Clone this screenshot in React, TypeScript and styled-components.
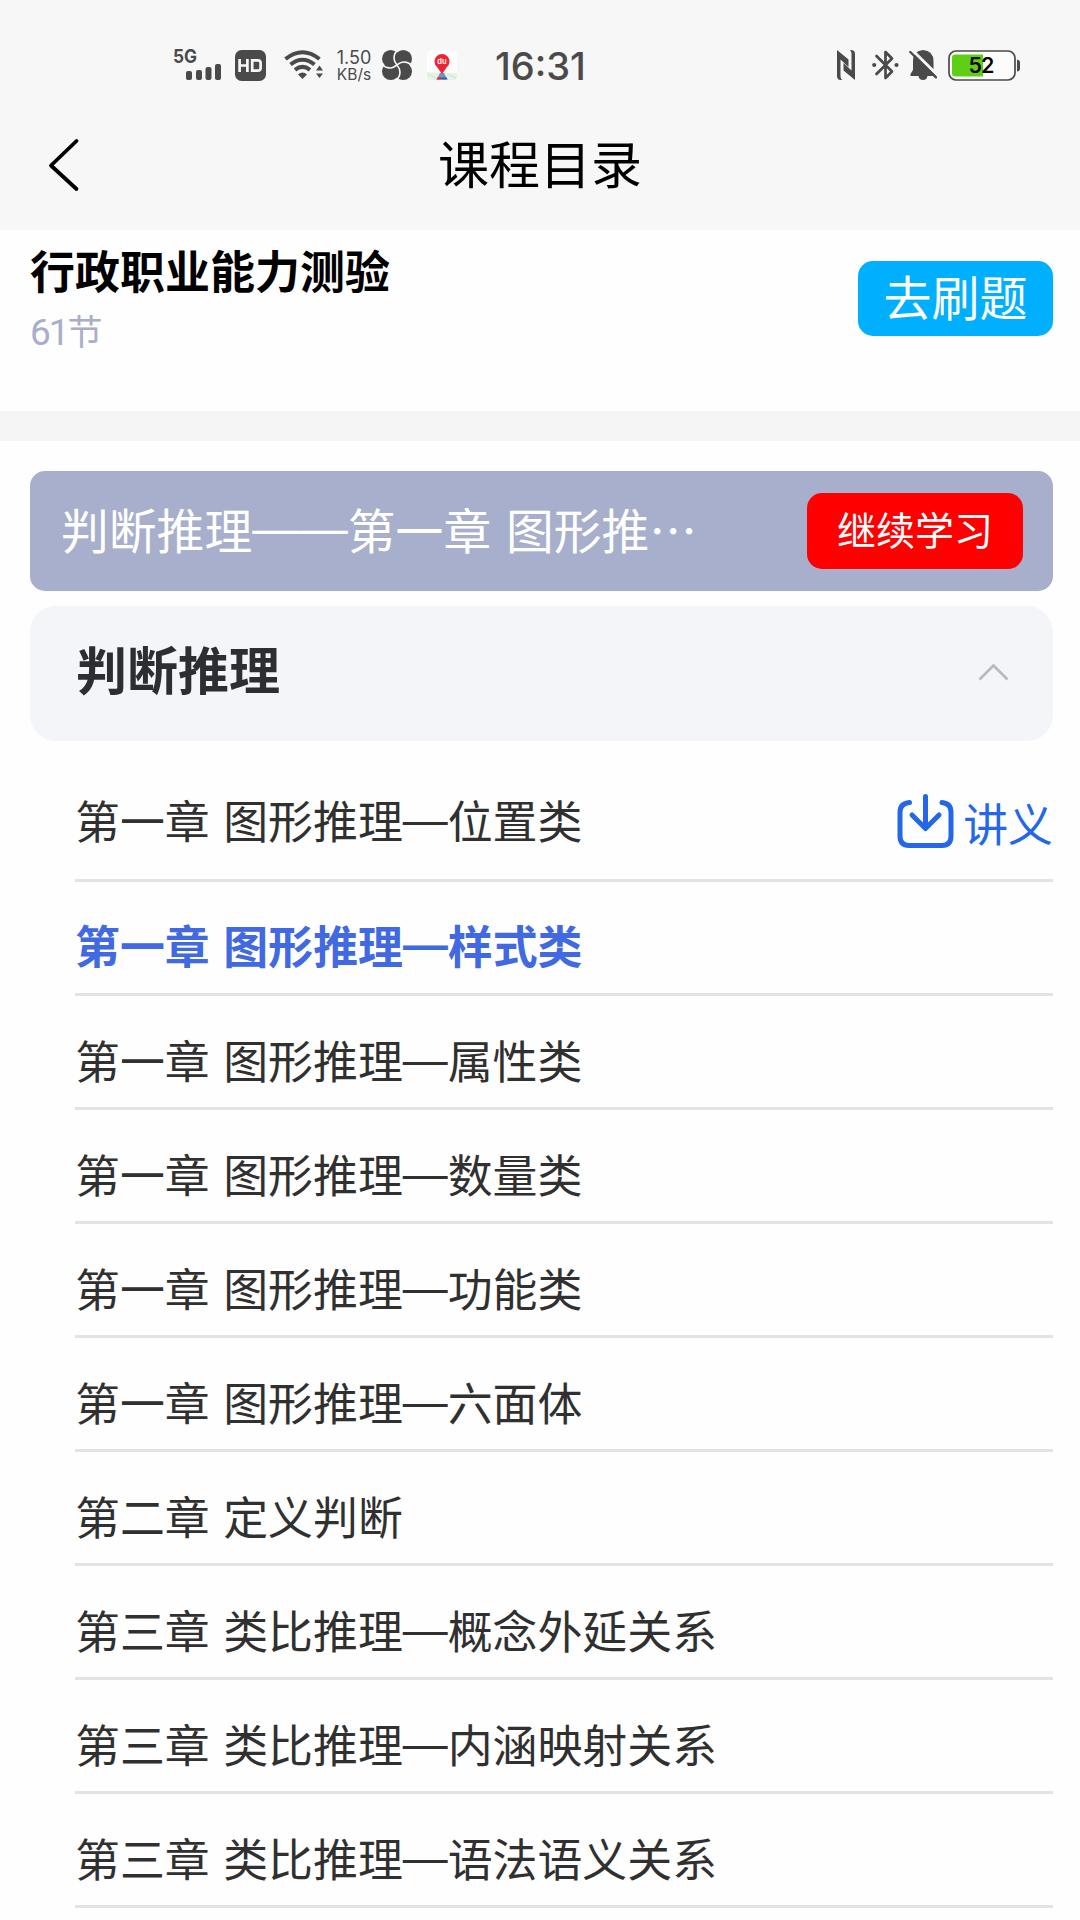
import React from "react";
import styled, { createGlobalStyle } from "styled-components";

const GlobalStyle = createGlobalStyle`
  * { box-sizing: border-box; }
  body {
    margin: 0;
    background: #fefefe;
    font-family: "Noto Sans CJK SC", "Liberation Sans", sans-serif;
    overflow: hidden;
  }
`;

const Page = styled.div`
  width: 1080px;
  height: 1920px;
  overflow: hidden;
  background: #fefefe;
`;

const Top = styled.header`
  height: 230px;
  background: #f7f7f7;
`;

const StatusBar = styled.div`
  height: 130px;
  padding: 34px 59px 34px 173px;
  display: flex;
  justify-content: space-between;
  align-items: center;
  color: #4a4a4a;
`;

const StatusGroup = styled.div`
  display: flex;
  align-items: center;
  height: 62px;
`;

const Glyph = styled.svg<{ $gap?: number }>`
  display: block;
  flex: none;
  margin-left: ${(p) => p.$gap ?? 0}px;
`;

const Speed = styled.div`
  width: 38px;
  margin-left: 11px;
  padding-top: 2px;
  display: flex;
  flex-direction: column;
  align-items: center;
  white-space: nowrap;
`;

const SpeedValue = styled.span`
  font: 400 18px/17px Inter, sans-serif;
`;

const SpeedUnit = styled.span`
  font: 400 15.5px/17px Inter, sans-serif;
`;

const Clock = styled.div`
  margin-left: 38px;
  padding-top: 2px;
  font: 500 38px/44px Inter, sans-serif;
`;

const NavBar = styled.div`
  height: 100px;
  padding: 0 47px;
  display: grid;
  grid-template-columns: 60px 1fr 60px;
  align-items: start;
`;

const BackButton = styled.button`
  border: 0;
  padding: 8px 0 0;
  background: none;
  text-align: left;
`;

const NavTitle = styled.h1`
  margin: 0;
  text-align: center;
  font-size: 51px;
  font-weight: 400;
  line-height: 65px;
  color: #000;
`;

const Course = styled.section`
  height: 181px;
  padding: 8px 27px 0 30px;
  display: flex;
  justify-content: space-between;
  align-items: flex-start;
`;

const CourseName = styled.h2`
  margin: 0;
  font-size: 45px;
  font-weight: 700;
  line-height: 64px;
  color: #000;
`;

const CourseCount = styled.div`
  font-size: 35px;
  font-weight: 400;
  line-height: 55px;
  color: #a9adcb;
`;

const Digits = styled.span`
  font-family: Roboto, sans-serif;
  font-size: 37px;
  font-weight: 400;
  letter-spacing: -2px;
`;

const PracticeButton = styled.button`
  width: 195px;
  height: 75px;
  margin-top: 23px;
  padding: 0 0 6px;
  border: 0;
  border-radius: 15px;
  background: #00b0ff;
  color: #fff;
  font: 400 48px/69px "Noto Sans CJK SC", sans-serif;
`;

const Divider = styled.div`
  height: 30px;
  background: #f5f5f5;
`;

const Catalog = styled.main`
  padding: 30px 27px 0 30px;
`;

const ResumeBar = styled.div`
  height: 120px;
  padding: 0 30px 4px 31px;
  border-radius: 15px;
  background: #a8afcc;
  display: flex;
  align-items: center;
  justify-content: space-between;
  color: #fff;
`;

const ResumeText = styled.div`
  font-size: 47.8px;
  line-height: 70px;
  word-spacing: 4px;
  white-space: nowrap;
`;

const ResumeButton = styled.button`
  width: 216px;
  height: 76px;
  margin-top: 4px;
  padding: 0 0 6px;
  border: 0;
  border-radius: 15px;
  background: #ff0000;
  color: #fff;
  font: 400 39px/60px "Noto Sans CJK SC", sans-serif;
`;

const ChapterHead = styled.div`
  height: 135px;
  margin-top: 15px;
  padding: 0 44px 12px 46px;
  border-radius: 26px;
  background: #f4f5f9;
  display: flex;
  align-items: center;
  justify-content: space-between;
`;

const ChapterTitle = styled.h3`
  margin: 0;
  font-size: 51px;
  font-weight: 700;
  line-height: 70px;
  color: #2d2e32;
`;

const ChevronBox = styled.span`
  padding-top: 9px;
`;

const Lessons = styled.ul`
  list-style: none;
  margin: 0 0 0 45px;
  padding: 0;
`;

const Lesson = styled.li<{ $active?: boolean; $first?: boolean }>`
  height: ${(p) => (p.$first ? 141 : 114)}px;
  padding-top: ${(p) => (p.$first ? 49 : p.$active ? 33 : 34)}px;
  border-bottom: 3px solid #e3e3e3;
  display: flex;
  align-items: flex-start;
  justify-content: space-between;
  font-size: 44.9px;
  line-height: 60px;
  font-weight: ${(p) => (p.$active ? 700 : 400)};
  color: ${(p) => (p.$active ? "#4169e1" : "#303030")};
  word-spacing: 3.5px;
  white-space: nowrap;
`;

const Dash = styled.span`
  font-family: "Liberation Sans", sans-serif;
  line-height: 0;
  vertical-align: 0.09em;
`;

const Handout = styled.a`
  display: flex;
  align-items: flex-start;
  gap: 9px;
  padding-top: 3px;
  color: #2468e8;
  line-height: 59px;
`;

const lessons = [
  "第一章 图形推理—位置类",
  "第一章 图形推理—样式类",
  "第一章 图形推理—属性类",
  "第一章 图形推理—数量类",
  "第一章 图形推理—功能类",
  "第一章 图形推理—六面体",
  "第二章 定义判断",
  "第三章 类比推理—概念外延关系",
  "第三章 类比推理—内涵映射关系",
  "第三章 类比推理—语法语义关系",
];

const Title = ({ text }: { text: string }) => (
  <span>
    {text.split(/(—+)/).map((part, i) => (part.startsWith("—") ? <Dash key={i}>{part}</Dash> : part))}
  </span>
);

const ink = "#4a4a4a";

const SignalIcon = () => (
  <Glyph width="50" height="46" viewBox="0 0 50 46">
    <text x="0" y="21" fontFamily="Inter, sans-serif" fontWeight="700" fontSize="19" fill={ink} textLength="24" lengthAdjust="spacingAndGlyphs">5G</text>
    <g fill={ink}>
      <rect x="13" y="29" width="6" height="9" rx="2" />
      <rect x="23" y="28" width="6" height="10" rx="2" />
      <rect x="32.5" y="25" width="6" height="13" rx="2" />
      <rect x="42" y="22" width="6" height="16" rx="2" />
    </g>
  </Glyph>
);

const HdIcon = () => (
  <Glyph width="31" height="31" viewBox="0 0 31 31" $gap={12}>
    <rect width="31" height="31" rx="6.5" fill={ink} />
    <path d="M4.6 9v13M12.4 9v13M4.6 15.5h7.8M17.2 10.3h5.6q2.8 0 2.8 2.6v5.2q0 2.6-2.8 2.6h-5.6z" fill="none" stroke="#f7f7f7" strokeWidth="2.7" />
  </Glyph>
);

const WifiIcon = () => (
  <Glyph width="40" height="30" viewBox="0 0 40 30" $gap={18}>
    <g fill="none" stroke={ink} strokeWidth="4">
      <path d="M1.5 9Q18.500 -4.500 35.500 9" />
      <path d="M6.500 14.500Q18.500 5 30.500 14.500" />
      <path d="M11 19.800Q18.500 14 26 19.800" />
    </g>
    <path d="M14 24.500Q18.500 20.500 23 24.500L18.500 29z" fill={ink} />
    <path d="M32 20.500l3.500-5 3.500 5zM32 23.500l3.500 4.500 3.500-4.500z" fill={ink} />
  </Glyph>
);

const CloverIcon = () => (
  <Glyph width="30" height="30" viewBox="0 0 30 30" $gap={9}>
    <g fill={ink}>
      <circle cx="8.700" cy="8.700" r="8.700" />
      <circle cx="8.700" cy="21.300" r="8.700" />
      <circle cx="21.300" cy="21.300" r="8.700" />
      <circle cx="21.300" cy="8.700" r="8.700" />
    </g>
    <g fill="none" stroke="#f7f7f7" strokeWidth="1.600">
      <path d="M15.500 15A9.500 9.500 0 0 1 16 0" />
      <path d="M15 15.500A9.500 9.500 0 0 1 30 16" />
      <path d="M14.500 15A9.500 9.500 0 0 1 14 30" />
      <path d="M15 14.500A9.500 9.500 0 0 1 0 14" />
    </g>
  </Glyph>
);

const MapIcon = () => (
  <Glyph width="30" height="30" viewBox="0 0 30 30" $gap={15}>
    <rect width="30" height="30" rx="5" fill="#fdfdfd" />
    <path d="M0 22l30 1v4q0 3-3 3H3q-3 0-3-3z" fill="#e9f3e5" />
    <path d="M1 24l8 4M20 24l9 4" stroke="#cfe6dc" strokeWidth="1.200" />
    <path d="M13 23h4l3.500 6.500h-11z" fill="#7195bd" />
    <path d="M10.500 27.500h4.500v2H9.500z" fill="#e22634" />
    <path d="M15 27.500h4.500l1 2H15z" fill="#2463c7" />
    <path d="M15 24L10 17A7.500 7.500 0 1 1 20 17z" fill="#ef2535" />
    <text x="15" y="14" textAnchor="middle" fontFamily="Inter, sans-serif" fontSize="7.500" fontWeight="600" fill="#fff">du</text>
  </Glyph>
);

const NfcIcon = () => (
  <Glyph width="18" height="30" viewBox="0 0 18 30">
    <path d="M5 30H4Q0 30 0 26V0L11.500 9.500V17L3.500 9.500V26Q3.500 28.500 5 30zM13 0H14Q18 0 18 4V30L6.500 20.500V13L14.500 20.500V4Q14.500 1.500 13 0z" fill={ink} />
  </Glyph>
);

const BluetoothIcon = () => (
  <Glyph width="27" height="30" viewBox="0 0 27 30" $gap={17}>
    <path d="M4.500 6L20 21.500 13.500 28V2L20 8.500 4.500 24" fill="none" stroke={ink} strokeWidth="2.700" strokeLinejoin="round" strokeLinecap="round" />
    <circle cx="2.200" cy="15" r="2.100" fill={ink} />
    <circle cx="24.500" cy="15" r="2.100" fill={ink} />
  </Glyph>
);

const MutedIcon = () => (
  <Glyph width="28" height="30" viewBox="0 0 28 30" $gap={10}>
    <path d="M14 0Q24.500 1 24.500 11v9l2 4V26H18.500Q18 30 14 30T9.500 26H1.500V24l2.500-4V11Q4 1 14 0z" fill={ink} />
    <path d="M2.500-.5L30 26.500" stroke="#f7f7f7" strokeWidth="3" />
    <path d="M1.300 2L27 27.300" stroke={ink} strokeWidth="2.400" strokeLinecap="round" />
  </Glyph>
);

const BatteryIcon = () => (
  <Glyph width="73" height="31" viewBox="0 0 73 31" $gap={11}>
    <rect x="1" y="1" width="66" height="29" rx="7" fill="#fcfcfc" stroke={ink} strokeWidth="1.700" />
    <path d="M7 4.500h28v22H7q-3 0-3-3v-16q0-3 3-3z" fill="#5fcf16" />
    <path d="M69 9.500q3 .5 3 3v6q0 2.500-3 3z" fill={ink} />
    <text x="33.500" y="22.800" textAnchor="middle" fontFamily="Inter, sans-serif" fontSize="21.500" fontWeight="600" fill="#050505" textLength="26">52</text>
  </Glyph>
);

const BackIcon = () => (
  <Glyph width="34" height="54" viewBox="0 0 34 54">
    <path d="M29.500 3L4 27.500 29.500 51" fill="none" stroke="#000" strokeWidth="3.800" strokeLinecap="round" strokeLinejoin="round" />
  </Glyph>
);

const ChevronUp = () => (
  <Glyph width="31" height="19" viewBox="0 0 31 19">
    <path d="M1.500 16.500L15.500 2.500 29.500 16.500" fill="none" stroke="#b9babd" strokeWidth="2.800" strokeLinejoin="round" />
  </Glyph>
);

const DownloadIcon = () => (
  <Glyph width="57" height="57" viewBox="0 0 57 57">
    <g fill="none" stroke="#2468e8" strokeWidth="5" strokeLinecap="round" strokeLinejoin="round">
      <path d="M12.500 9.500Q3 10.500 3 19v24q0 9.500 9 9.500h33q9 0 9-9.500V19q0-8.500-9-9.500" />
      <path d="M28.500 3.500V35M15 22L28.500 35.500 42 22" />
    </g>
  </Glyph>
);

export default function App() {
  return (
    <Page>
      <GlobalStyle />
      <Top>
        <StatusBar>
          <StatusGroup>
            <SignalIcon />
            <HdIcon />
            <WifiIcon />
            <Speed>
              <SpeedValue>1.50</SpeedValue>
              <SpeedUnit>KB/s</SpeedUnit>
            </Speed>
            <CloverIcon />
            <MapIcon />
            <Clock>16:31</Clock>
          </StatusGroup>
          <StatusGroup>
            <NfcIcon />
            <BluetoothIcon />
            <MutedIcon />
            <BatteryIcon />
          </StatusGroup>
        </StatusBar>
        <NavBar>
          <BackButton aria-label="返回">
            <BackIcon />
          </BackButton>
          <NavTitle>课程目录</NavTitle>
        </NavBar>
      </Top>
      <Course>
        <div>
          <CourseName>行政职业能力测验</CourseName>
          <CourseCount>
            <Digits>61</Digits>节
          </CourseCount>
        </div>
        <PracticeButton>去刷题</PracticeButton>
      </Course>
      <Divider />
      <Catalog>
        <ResumeBar>
          <ResumeText>
            <Title text="判断推理——第一章 图形推…" />
          </ResumeText>
          <ResumeButton>继续学习</ResumeButton>
        </ResumeBar>
        <ChapterHead>
          <ChapterTitle>判断推理</ChapterTitle>
          <ChevronBox>
            <ChevronUp />
          </ChevronBox>
        </ChapterHead>
        <Lessons>
          {lessons.map((name, i) => (
            <Lesson key={name} $first={i === 0} $active={i === 1}>
              <Title text={name} />
              {i === 0 && (
                <Handout>
                  <DownloadIcon />
                  <span>讲义</span>
                </Handout>
              )}
            </Lesson>
          ))}
        </Lessons>
      </Catalog>
    </Page>
  );
}
